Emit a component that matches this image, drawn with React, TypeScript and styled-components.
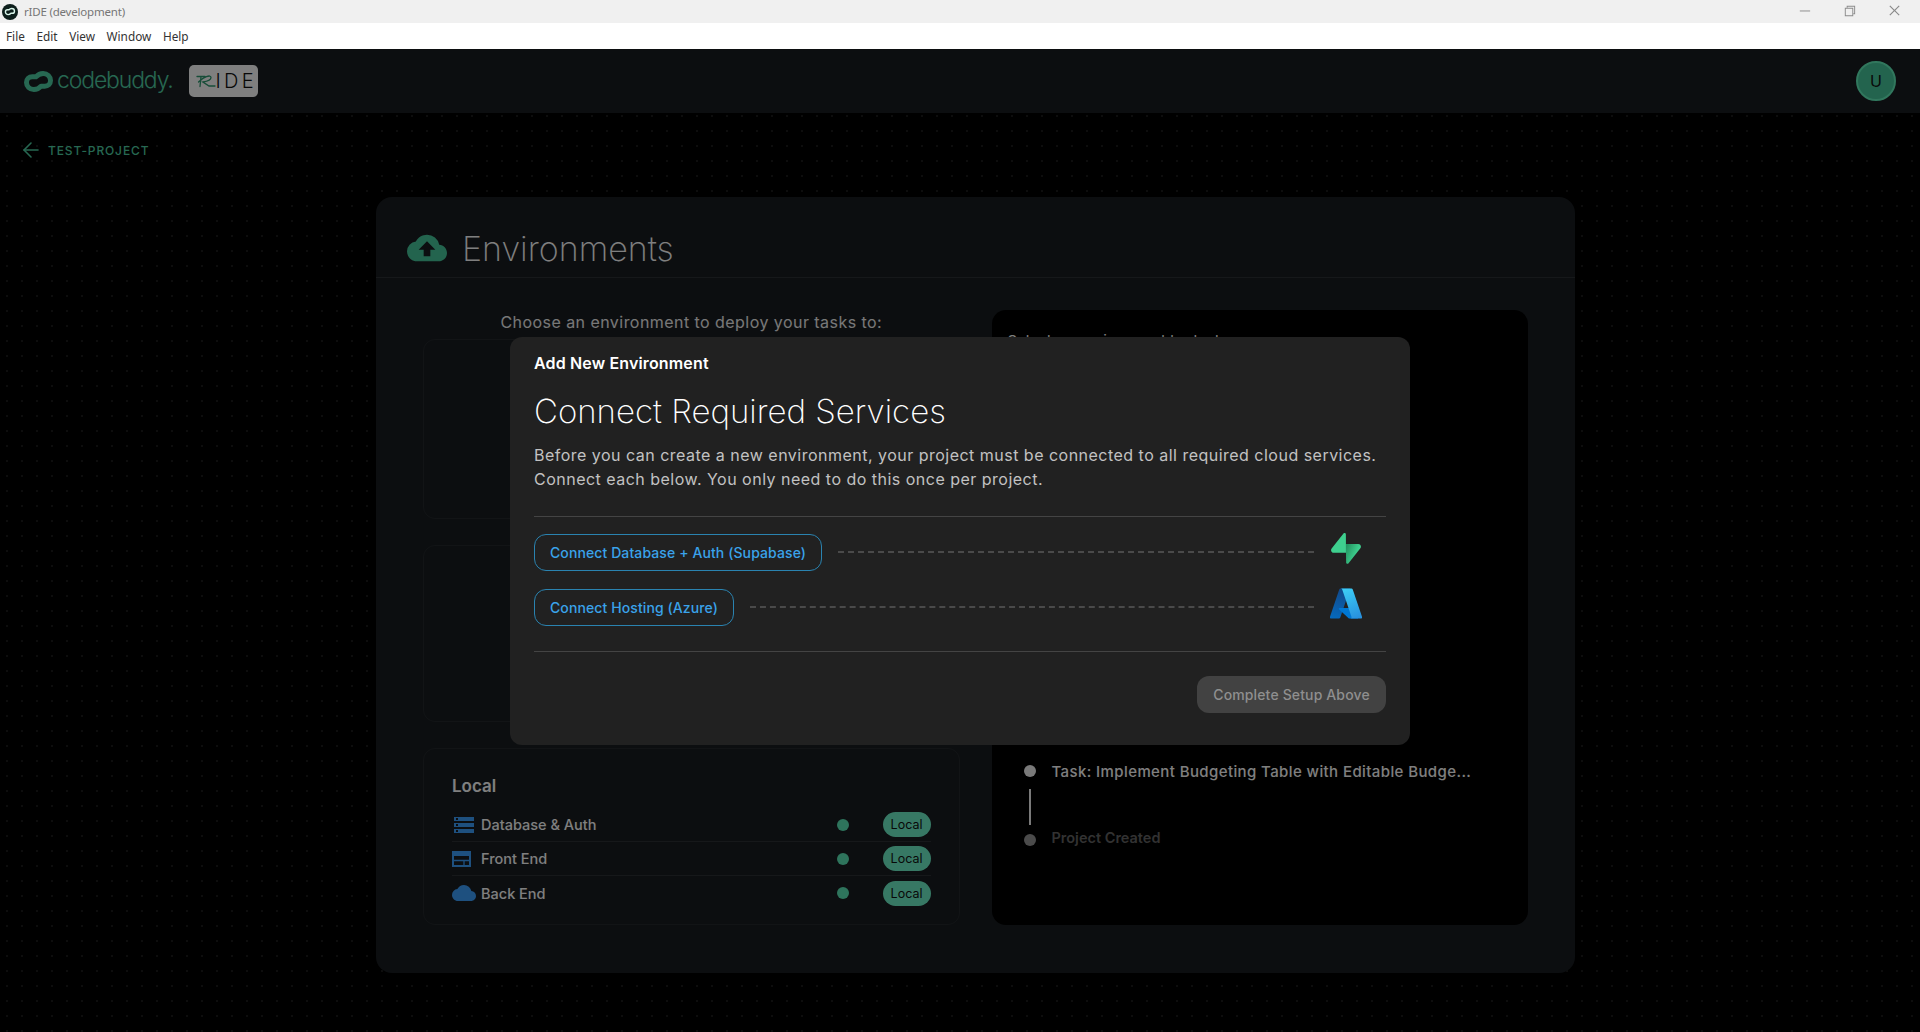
import React from "react";
import styled, { createGlobalStyle } from "styled-components";
import { MdCloudUpload, MdStorage, MdCloud } from "react-icons/md";
import { VscChromeMinimize, VscChromeRestore, VscChromeClose } from "react-icons/vsc";
import { FiArrowLeft } from "react-icons/fi";

const Global = createGlobalStyle`
  html, body { margin: 0; padding: 0; height: 100%; background: #000; }
  body { font-family: "Inter", "Liberation Sans", sans-serif; overflow: hidden; }
  #root { height: 100%; }
  * { box-sizing: border-box; }
`;

const Window = styled.div`
  width: 1920px;
  height: 1032px;
  display: flex;
  flex-direction: column;
  overflow: hidden;
`;

const TitleBar = styled.div`
  height: 23px;
  flex: none;
  background: #f0f0f0;
  display: flex;
  align-items: center;
  padding-left: 2px;
  font: 11.5px "Noto Sans", sans-serif;
  letter-spacing: -0.2px;
  color: #767676;
`;

const AppMark = styled.svg`
  width: 16px;
  height: 16px;
  margin-right: 6px;
`;

const WindowControls = styled.div`
  margin-left: auto;
  display: flex;
  color: #8a8a8a;
  height: 100%;
  padding-right: 3px;
`;

const WindowControl = styled.div`
  width: 45px;
  height: 100%;
  display: flex;
  align-items: center;
  justify-content: center;
  font-size: 15px;
  padding-bottom: 3px;
`;

const MenuBar = styled.nav`
  height: 26px;
  flex: none;
  background: #fff;
  display: flex;
  align-items: center;
  gap: 11.6px;
  padding-left: 6px;
  font: 11.8px "Noto Sans", sans-serif;
  color: #333;
`;

const AppArea = styled.div`
  position: relative;
  flex: 1;
  min-height: 0;
  display: flex;
  flex-direction: column;
  background-color: #000;
  background-image: radial-gradient(circle at 7px 7px, #1a1a1a 0.8px, transparent 1.1px);
  background-size: 15px 15px;
`;

const Header = styled.header`
  height: 64px;
  flex: none;
  background: #181c20;
  display: flex;
  align-items: center;
  padding: 0 24px;
`;

const LogoMark = styled.svg`
  width: 29px;
  height: 23px;
  margin-right: 4px;
`;

const LogoText = styled.span`
  font-family: "Inter", sans-serif;
  font-weight: 300;
  font-size: 23px;
  letter-spacing: -1.15px;
  color: #4fd0a4;
  margin-right: 17px;
  position: relative;
  top: -1px;
`;

const IdeBadge = styled.div`
  width: 69px;
  height: 32px;
  border-radius: 5px;
  background: #fff;
  display: flex;
  align-items: center;
  padding-left: 7px;
  margin-left: -1px;
`;

const IdeText = styled.span`
  font-family: "Inter", sans-serif;
  font-weight: 300;
  font-size: 20px;
  letter-spacing: 3.2px;
  color: #111;
`;

const Avatar = styled.div`
  margin-left: auto;
  width: 40px;
  height: 40px;
  border-radius: 50%;
  background: #46c89c;
  border: 2px solid #62eebb;
  margin-right: 0;
  display: flex;
  align-items: center;
  justify-content: center;
  color: #111;
  font-size: 16px;
`;

const Main = styled.main`
  flex: 1;
  min-height: 0;
  display: flex;
  flex-direction: column;
  align-items: stretch;
`;

const BackRow = styled.div`
  height: 18px;
  margin: 28px 0 38px 19px;
  display: flex;
  align-items: center;
  gap: 5px;
  color: #4fd0a4;
  font-size: 12px;
  font-weight: 500;
  letter-spacing: 0.88px;
  svg { font-size: 24px; stroke-width: 1.6px; }
`;

const Card = styled.section`
  width: 1199px;
  height: 776px;
  margin: 0 0 0 376px;
  background: #181c20;
  border-radius: 16px;
  display: flex;
  flex-direction: column;
`;

const CardHeader = styled.div`
  height: 81px;
  flex: none;
  border-bottom: 1px solid #2c3135;
  display: flex;
  align-items: center;
  padding: 22px 31px 0;
  gap: 15px;
  svg { font-size: 40px; color: #46c89c; }
`;

const PageTitle = styled.h1`
  margin: 0;
  font-weight: 200;
  font-size: 34px;
  color: #fff;
`;

const CardBody = styled.div`
  flex: 1;
  min-height: 0;
  display: grid;
  grid-template-columns: 1fr 1fr;
  column-gap: 32px;
  padding: 32px 47px 48px;
`;

const LeftColumn = styled.div`
  display: flex;
  flex-direction: column;
  gap: 26px;
`;

const Prompt = styled.p`
  margin: 0 0 -21px;
  height: 24px;
  line-height: 24px;
  text-align: center;
  font-size: 16px;
  letter-spacing: 0.45px;
  color: #f0f0f0;
`;

const EnvCard = styled.div<{ $height: number }>`
  height: ${(p) => p.$height}px;
  flex: none;
  border: 1px solid #24282c;
  border-radius: 12px;
  padding: 25px 28px 0;
`;

const EnvName = styled.h2`
  margin: 0 0 10px;
  height: 24px;
  line-height: 24px;
  font-size: 17px;
  font-weight: 600;
  color: #fff;
`;

const EnvRow = styled.div<{ $last?: boolean }>`
  height: 34px;
  display: flex;
  align-items: center;
  border-bottom: ${(p) => (p.$last ? "none" : "1px solid #2c3135")};
  color: #fff;
  font-size: 14.5px;
  font-weight: 500;
`;

const RowIcon = styled.span`
  width: 29px;
  display: flex;
  align-items: center;
  color: #3ca0ff;
  svg { display: block; }
`;

const StatusDot = styled.span`
  margin-left: auto;
  width: 12px;
  height: 12px;
  border-radius: 50%;
  background: #5ce8b8;
  margin-right: 34px;
`;

const Chip = styled.span`
  width: 48px;
  height: 25px;
  border-radius: 13px;
  background: #6ef0c8;
  color: #111;
  font-size: 12.5px;
  font-weight: 400;
  display: flex;
  align-items: center;
  justify-content: center;
`;

const HistoryPanel = styled.div`
  background: #000;
  border-radius: 14px;
  display: flex;
  flex-direction: column;
  padding: 20px 0 80px 32px;
`;

const PanelText = styled.div`
  margin-left: -16px;
  font-size: 15px;
  color: #fff;
  line-height: 22px;
`;

const Timeline = styled.div`
  margin-top: auto;
  display: flex;
  flex-direction: column;
`;

const TimelineRow = styled.div<{ $height: number }>`
  height: ${(p) => p.$height}px;
  display: flex;
  align-items: center;
  gap: 16px;
`;

const TimelineLabel = styled.span<{ $muted?: boolean }>`
  font-size: ${(p) => (p.$muted ? "14.5px" : "15px")};
  font-weight: ${(p) => (p.$muted ? 600 : 500)};
  letter-spacing: ${(p) => (p.$muted ? "0" : "0.4px")};
  color: ${(p) => (p.$muted ? "#646464" : "#fff")};
  margin-bottom: ${(p) => (p.$muted ? "5px" : "0")};
`;

const TimelineDot = styled.span<{ $muted?: boolean }>`
  width: 12px;
  height: 12px;
  border-radius: 50%;
  flex: none;
  background: ${(p) => (p.$muted ? "#969696" : "#f4f4f4")};
`;

const Connector = styled.div`
  width: 2px;
  height: 36px;
  margin: 6px 0 10px 5px;
  background: #f4f4f4;
`;

const Backdrop = styled.div`
  position: absolute;
  inset: 0;
  background: rgba(0, 0, 0, 0.5);
  display: flex;
  align-items: center;
  justify-content: center;
`;

const Modal = styled.div`
  width: 900px;
  height: 408px;
  background: #212121;
  border-radius: 12px;
  padding: 16px 24px 32px;
  display: flex;
  flex-direction: column;
  color: #fff;
`;

const ModalLabel = styled.div`
  height: 20px;
  line-height: 20px;
  font-size: 16px;
  font-weight: 600;
  letter-spacing: 0.15px;
`;

const ModalHeading = styled.h2`
  margin: 16px 0 0;
  height: 44px;
  line-height: 44px;
  font-size: 33px;
  font-weight: 200;
`;

const ModalText = styled.p`
  margin: 10px 0 0;
  font-size: 16px;
  line-height: 24px;
  color: #c2c2c2;
  letter-spacing: 0.485px;
`;

const Rule = styled.hr<{ $top: number }>`
  margin: ${(p) => p.$top}px 0 0;
  border: 0;
  border-top: 1px solid #444;
  width: 100%;
`;

const ServiceList = styled.div`
  margin-top: 17px;
  display: flex;
  flex-direction: column;
  gap: 18px;
`;

const ServiceRow = styled.div`
  display: flex;
  align-items: center;
  gap: 16px;
`;

const ConnectButton = styled.button`
  height: 37px;
  padding: 0 15px;
  border: 1px solid #2a83b0;
  border-radius: 12px;
  background: transparent;
  color: #3aa3ea;
  font-family: inherit;
  font-size: 14px;
  font-weight: 500;
  letter-spacing: 0.1px;
`;

const Dash = styled.div`
  flex: 1;
  border-top: 2px dashed #4a4a4a;
`;

const ServiceLogo = styled.div`
  width: 56px;
  height: 37px;
  svg { display: block; margin-top: -1px; }
`;

const Footer = styled.div`
  margin-top: 24px;
  display: flex;
  justify-content: flex-end;
`;

const CompleteButton = styled.button`
  height: 37px;
  width: 189px;
  border: 0;
  border-radius: 12px;
  background: #424242;
  color: #8f8f8f;
  font-family: inherit;
  font-size: 14px;
  font-weight: 500;
  letter-spacing: 0.14px;
`;

const BuddyIcon = ({ stroke, w }: { stroke: string; w: number }) => (
  <path
    d="M8 6.5 H11.5 C13.5 4.2 15.8 3.2 18.5 3.2 C22.5 3.2 25.6 6.3 25.6 10 C25.6 13.5 23.2 15.5 20 15.5 H16.5 C14.5 17.8 12.2 18.8 9.5 18.8 C5.4 18.8 2.4 15.8 2.4 12 C2.4 8.7 4.8 6.5 8 6.5 Z"
    fill="none"
    stroke={stroke}
    strokeWidth={w}
    strokeLinejoin="round"
  />
);

const FrontEndIcon = () => (
  <svg width="19" height="16" viewBox="0 0 19 16" fill="none">
    <rect x="1" y="1" width="17" height="14" stroke="currentColor" strokeWidth="2" />
    <rect x="1" y="1" width="17" height="4" fill="currentColor" />
    <path d="M2 9.5h15M12 9.5v5" stroke="currentColor" strokeWidth="1.3" />
  </svg>
);

const SupabaseLogo = () => (
  <svg width="32" height="31" viewBox="-1 0 111 113">
    <defs>
      <linearGradient id="supa" x1="54" y1="55" x2="94" y2="72" gradientUnits="userSpaceOnUse">
        <stop stopColor="#249361" />
        <stop offset="1" stopColor="#3ecf8e" />
      </linearGradient>
    </defs>
    <path
      d="M63.7076 110.284C60.8481 113.885 55.0502 111.912 54.9813 107.314L53.9738 40.0627L99.1935 40.0627C107.384 40.0627 111.952 49.5228 106.859 55.9374L63.7076 110.284Z"
      fill="url(#supa)"
    />
    <path
      d="M45.317 2.07103C48.1765 -1.53037 53.9745 0.442937 54.0434 5.041L54.4849 72.2922H9.83113C1.64038 72.2922 -2.92775 62.8321 2.1655 56.4175L45.317 2.07103Z"
      fill="#3ECF8E"
    />
  </svg>
);

const AzureLogo = () => (
  <svg width="32" height="31" viewBox="4 6 88 84">
    <defs>
      <linearGradient id="az1" x1="30" y1="10" x2="8" y2="88" gradientUnits="userSpaceOnUse">
        <stop stopColor="#114a8b" />
        <stop offset="1" stopColor="#0669bc" />
      </linearGradient>
      <linearGradient id="az2" x1="46" y1="10" x2="80" y2="86" gradientUnits="userSpaceOnUse">
        <stop stopColor="#3ccbf4" />
        <stop offset="1" stopColor="#2892df" />
      </linearGradient>
    </defs>
    <path d="M33.338 6.544h26.038l-27.03 80.087a4.152 4.152 0 0 1-3.933 2.824H8.149a4.145 4.145 0 0 1-3.928-5.47L29.404 9.368a4.152 4.152 0 0 1 3.934-2.825z" fill="url(#az1)" />
    <path d="M71.175 60.261h-41.29a1.911 1.911 0 0 0-1.305 3.309l26.532 24.764a4.171 4.171 0 0 0 2.846 1.121h23.38z" fill="#0078d4" />
    <path d="M66.595 9.364a4.145 4.145 0 0 0-3.928-2.82H33.648a4.146 4.146 0 0 1 3.928 2.82l25.184 74.62a4.146 4.146 0 0 1-3.928 5.472h29.02a4.146 4.146 0 0 0 3.927-5.472z" fill="url(#az2)" />
  </svg>
);

const envRows = [
  { name: "Database & Auth", icon: <MdStorage size={24} /> },
  { name: "Front End", icon: <FrontEndIcon /> },
  { name: "Back End", icon: <MdCloud size={24} /> },
];

export default function App() {
  return (
    <Window>
      <Global />
      <TitleBar>
        <AppMark viewBox="0 0 32 32">
          <circle cx="16" cy="16" r="16" fill="#0d1f1c" />
          <g transform="translate(5 6.5) scale(0.78)">
            <BuddyIcon stroke="#d8f5ea" w={3.6} />
          </g>
        </AppMark>
        rIDE (development)
        <WindowControls>
          <WindowControl><VscChromeMinimize /></WindowControl>
          <WindowControl><VscChromeRestore /></WindowControl>
          <WindowControl><VscChromeClose /></WindowControl>
        </WindowControls>
      </TitleBar>
      <MenuBar>
        <span>File</span>
        <span>Edit</span>
        <span>View</span>
        <span>Window</span>
        <span>Help</span>
      </MenuBar>
      <AppArea>
        <Header>
          <LogoMark viewBox="0 0 28 22">
            <BuddyIcon stroke="#4fd0a4" w={4.8} />
          </LogoMark>
          <LogoText>codebuddy.</LogoText>
          <IdeBadge>
            <svg width="20" height="16" viewBox="0 0 20 16" fill="none" stroke="#2d9a70" strokeWidth="1.3" strokeLinecap="round">
              <path d="M1 3.5 H9 M5 3.5 L4 13.5 M2.5 9 C7 4 15 1 15 4.5 C15 7 10 8.5 7 9 L13 13 H19" />
            </svg>
            <IdeText>IDE</IdeText>
          </IdeBadge>
          <Avatar>U</Avatar>
        </Header>
        <Main>
          <BackRow>
            <FiArrowLeft />
            TEST-PROJECT
          </BackRow>
          <Card>
            <CardHeader>
              <MdCloudUpload />
              <PageTitle>Environments</PageTitle>
            </CardHeader>
            <CardBody>
              <LeftColumn>
                <Prompt>Choose an environment to deploy your tasks to:</Prompt>
                <EnvCard $height={180} />
                <EnvCard $height={177} />
                <EnvCard $height={177}>
                  <EnvName>Local</EnvName>
                  {envRows.map((row, i) => (
                    <EnvRow key={row.name} $last={i === envRows.length - 1}>
                      <RowIcon>{row.icon}</RowIcon>
                      {row.name}
                      <StatusDot />
                      <Chip>Local</Chip>
                    </EnvRow>
                  ))}
                </EnvCard>
              </LeftColumn>
              <HistoryPanel>
                <PanelText>Select an environment to deploy</PanelText>
                <Timeline>
                  <TimelineRow $height={24}>
                    <TimelineDot />
                    <TimelineLabel>Task: Implement Budgeting Table with Editable Budge...</TimelineLabel>
                  </TimelineRow>
                  <Connector />
                  <TimelineRow $height={10}>
                    <TimelineDot $muted />
                    <TimelineLabel $muted>Project Created</TimelineLabel>
                  </TimelineRow>
                </Timeline>
              </HistoryPanel>
            </CardBody>
          </Card>
        </Main>
        <Backdrop>
          <Modal>
            <ModalLabel>Add New Environment</ModalLabel>
            <ModalHeading>Connect Required Services</ModalHeading>
            <ModalText>
              Before you can create a new environment, your project must be connected to all required cloud services.
              <br />
              Connect each below. You only need to do this once per project.
            </ModalText>
            <Rule $top={25} />
            <ServiceList>
              <ServiceRow>
                <ConnectButton>Connect Database + Auth (Supabase)</ConnectButton>
                <Dash />
                <ServiceLogo><SupabaseLogo /></ServiceLogo>
              </ServiceRow>
              <ServiceRow>
                <ConnectButton>Connect Hosting (Azure)</ConnectButton>
                <Dash />
                <ServiceLogo><AzureLogo /></ServiceLogo>
              </ServiceRow>
            </ServiceList>
            <Rule $top={25} />
            <Footer>
              <CompleteButton>Complete Setup Above</CompleteButton>
            </Footer>
          </Modal>
        </Backdrop>
      </AppArea>
    </Window>
  );
}
